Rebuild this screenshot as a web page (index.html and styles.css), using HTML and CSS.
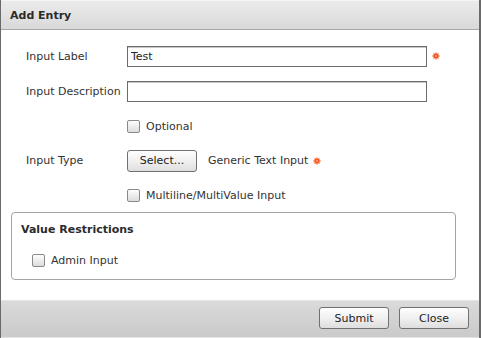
FILE: index.html
```html
<!DOCTYPE html>
<html lang="en">
  <head>
    <meta charset="UTF-8" />
    <title>Add Entry</title>
    <link rel="stylesheet" href="styles.css">
  </head>

  <body>
    <div class="dialog">
      <div class="dialog-header">Add Entry</div>

      <div class="dialog-body">
        <div class="form-grid">
          <label class="field-label" for="input-label">Input Label</label>
          <div class="field">
            <input type="text" id="input-label" class="text-input" value="Test" />
            <svg class="required" viewBox="0 0 8 8" width="8" height="8">
              <path d="M4 0.5V7.5M0.5 4H7.5M1.5 1.5L6.5 6.5M6.5 1.5L1.5 6.5" />
              <circle cx="4" cy="4" r="1.3" />
            </svg>
          </div>

          <label class="field-label" for="input-desc">Input Description</label>
          <div class="field">
            <input type="text" id="input-desc" class="text-input" value="" />
          </div>

          <span></span>
          <label class="field check">
            <input type="checkbox" class="checkbox" /> Optional
          </label>

          <span class="field-label">Input Type</span>
          <div class="field">
            <button class="btn btn-select">Select...</button>
            <span class="type-name">Generic Text Input</span>
            <svg class="required" viewBox="0 0 8 8" width="8" height="8">
              <path d="M4 0.5V7.5M0.5 4H7.5M1.5 1.5L6.5 6.5M6.5 1.5L1.5 6.5" />
              <circle cx="4" cy="4" r="1.3" />
            </svg>
          </div>

          <span></span>
          <label class="field check">
            <input type="checkbox" class="checkbox" /> Multiline/MultiValue Input
          </label>
        </div>

        <div class="restrictions">
          <div class="restrictions-title">Value Restrictions</div>
          <label class="check admin-check">
            <input type="checkbox" class="checkbox" /> Admin Input
          </label>
        </div>
      </div>

      <div class="dialog-footer">
        <button class="btn">Submit</button>
        <button class="btn">Close</button>
      </div>
    </div>
  </body>
</html>
```

FILE: styles.css
```css
body {
  margin: 0;
  font-family: "DejaVu Sans", Verdana, sans-serif;
  font-size: 11px;
  color: #333;
  background: #fff;
}

.dialog {
  width: 481px;
  height: 338px;
  box-sizing: border-box;
  border-left: 1px solid #6a6a6a;
  border-right: 2px solid #6a6a6a;
  display: flex;
  flex-direction: column;
}

.dialog-header {
  height: 30px;
  box-sizing: border-box;
  padding-left: 9px;
  display: flex;
  align-items: center;
  font-weight: bold;
  color: #2b2b2b;
  background: linear-gradient(#ebebeb, #d9d9d9);
  border-top: 1px solid #f4f4f4;
  border-bottom: 1px solid #a8a8a8;
}

.dialog-body {
  flex: 1;
  padding: 8px 24px 0 10px;
}

.form-grid {
  display: grid;
  grid-template-columns: 116px 1fr;
  grid-template-rows: 36px 35px 34px 35px 34px;
}

.field-label {
  display: flex;
  align-items: center;
  padding-left: 15px;
}

.field {
  display: flex;
  align-items: center;
}

.text-input {
  width: 300px;
  height: 21px;
  box-sizing: border-box;
  margin: 0;
  padding: 0 3px;
  border: 1px solid #6b6b6b;
  box-shadow: inset 0 1px 0 #c8c8c8;
  font-family: inherit;
  font-size: 11px;
  color: #222;
  outline: none;
}

.required {
  margin-left: 5px;
  fill: #fff;
  stroke: #f2561d;
  stroke-width: 1.3;
}

.check {
  gap: 6px;
}

.checkbox {
  appearance: none;
  -webkit-appearance: none;
  width: 13px;
  height: 13px;
  margin: 0;
  border: 1px solid #8a8a8a;
  border-radius: 2px;
  background: linear-gradient(#fdfdfd, #dcdcdc);
}

.btn {
  height: 22px;
  width: 70px;
  box-sizing: border-box;
  margin: 0;
  border: 1px solid #707070;
  border-radius: 3px;
  background: linear-gradient(#fefefe, #f0f0f0 50%, #dedede);
  font-family: inherit;
  font-size: 11px;
  color: #222;
  padding: 0;
}

.type-name {
  margin-left: 11px;
}

.restrictions {
  width: 445px;
  height: 68px;
  box-sizing: border-box;
  border: 1px solid #a4a4a4;
  border-radius: 4px;
  padding: 10px 0 0 9px;
}

.restrictions-title {
  font-weight: bold;
  color: #2b2b2b;
}

.admin-check {
  display: flex;
  align-items: center;
  margin-top: 18px;
  margin-left: 11px;
}

.dialog-footer {
  height: 38px;
  box-sizing: border-box;
  display: flex;
  justify-content: flex-end;
  align-items: flex-start;
  gap: 10px;
  padding: 6px 10px 0 0;
  background: linear-gradient(#dadada, #cacaca);
  border-top: 1px solid #e6e6e6;
  border-bottom: 1px solid #e4e4e4;
}
```
